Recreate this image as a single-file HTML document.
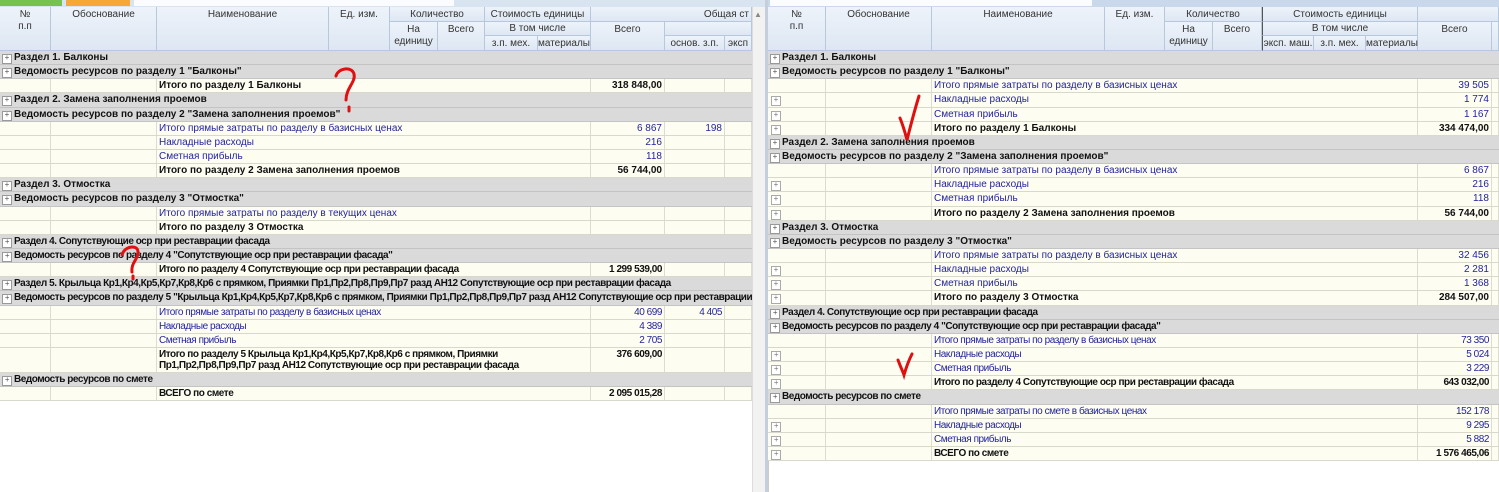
<!DOCTYPE html>
<html><head><meta charset="utf-8"><style>
*{margin:0;padding:0;box-sizing:border-box}
body{width:1499px;height:492px;overflow:hidden;background:#fff;font-family:"Liberation Sans","DejaVu Sans",sans-serif;font-size:10px;color:#111;position:relative}
.a{position:absolute}
.h{position:absolute;background:linear-gradient(#eef3fa,#dde7f3);border-right:1px solid #b8c8dc;border-bottom:1px solid #b8c8dc;color:#333;text-align:center;font-size:10px;line-height:12px;padding-top:2px}
.rows{position:absolute;top:51px}
.r{display:flex;height:14.15px;border-bottom:1px solid #d8d8cc;background:#fdfdf2;line-height:14.5px;white-space:nowrap;overflow:hidden}
.r>div{border-right:1px solid #dcdcd0;height:100%;overflow:visible;flex:none}
.g{background:#dadada;border-bottom:1px solid #c4c4c4;font-weight:bold;padding-left:14px;position:relative}
.g:before{content:"+";position:absolute;left:2px;top:3px;width:8px;height:8px;border:1px solid #999;background:#fff;font-size:8px;line-height:6px;text-align:center;font-weight:normal;color:#555}
.b{color:#2323a0}
.bd{font-weight:bold}
.n{text-align:right;padding-right:2px}
.t{padding-left:2px}
.pl{position:relative}
.pl:before{content:"+";position:absolute;left:3px;top:3px;width:8px;height:8px;border:1px solid #aaa;font-size:8px;line-height:6px;text-align:center;color:#777;background:#fff}
.c{letter-spacing:-0.45px}
</style></head><body>
<div class="a" style="left:0;top:0;width:765px;height:7px;background:#d9e4f1"></div>
<div class="a" style="left:0;top:0;width:62px;height:6px;background:#78c050"></div>
<div class="a" style="left:66px;top:0;width:64px;height:6px;background:#f5a838"></div>
<div class="a" style="left:134px;top:0;width:320px;height:6px;background:#fafcff"></div>
<div class="a" style="left:768px;top:0;width:731px;height:7px;background:#c9d8ea"></div>
<div class="a" style="left:770px;top:0;width:322px;height:6px;background:#fafcff"></div>
<div class="a" style="left:752px;top:7px;width:13px;height:485px;background:#f2f2f2;border-left:1px solid #ddd"></div>
<div class="a" style="left:754px;top:10px;font-size:8px;color:#888">▲</div>
<div class="a" style="left:765px;top:0;width:3px;height:492px;background:#c5cfdc"></div>

<div class="h" style="left:0;top:7px;width:51px;height:44px">№<br>п.п</div>
<div class="h" style="left:51px;top:7px;width:106px;height:44px">Обоснование</div>
<div class="h" style="left:157px;top:7px;width:172px;height:44px">Наименование</div>
<div class="h" style="left:329px;top:7px;width:61px;height:44px">Ед. изм.</div>
<div class="h" style="left:390px;top:7px;width:95px;height:15px">Количество</div>
<div class="h" style="left:390px;top:22px;width:48px;height:29px">На<br>единицу</div>
<div class="h" style="left:438px;top:22px;width:47px;height:29px">Всего</div>
<div class="h" style="left:485px;top:7px;width:106px;height:15px">Стоимость единицы</div>
<div class="h" style="left:485px;top:22px;width:106px;height:14px;padding-top:1px">В том числе</div>
<div class="h" style="left:485px;top:36px;width:53px;height:15px">з.п. мех.</div>
<div class="h" style="left:538px;top:36px;width:53px;height:15px">материалы</div>
<div class="h" style="left:591px;top:7px;width:161px;height:15px;text-align:right;padding-right:2px">Общая ст</div>
<div class="h" style="left:591px;top:22px;width:74px;height:29px">Всего</div>
<div class="h" style="left:665px;top:22px;width:87px;height:14px"></div>
<div class="h" style="left:665px;top:36px;width:60px;height:15px">основ. з.п.</div>
<div class="h" style="left:725px;top:36px;width:27px;height:15px;text-align:left;padding-left:3px">эксп</div>

<div class="h" style="left:768px;top:7px;width:58px;height:44px">№<br>п.п</div>
<div class="h" style="left:826px;top:7px;width:106px;height:44px">Обоснование</div>
<div class="h" style="left:932px;top:7px;width:173px;height:44px">Наименование</div>
<div class="h" style="left:1105px;top:7px;width:60px;height:44px">Ед. изм.</div>
<div class="h" style="left:1165px;top:7px;width:97px;height:15px">Количество</div>
<div class="h" style="left:1165px;top:22px;width:48px;height:29px">На<br>единицу</div>
<div class="h" style="left:1213px;top:22px;width:49px;height:29px">Всего</div>
<div class="h" style="left:1262px;top:7px;width:156px;height:15px;border-left:1px solid #555">Стоимость единицы</div>
<div class="h" style="left:1262px;top:22px;width:156px;height:14px;padding-top:1px;border-left:1px solid #555">В том числе</div>
<div class="h" style="left:1262px;top:36px;width:52px;height:15px;border-left:1px solid #555">эксп. маш.</div>
<div class="h" style="left:1314px;top:36px;width:52px;height:15px">з.п. мех.</div>
<div class="h" style="left:1366px;top:36px;width:52px;height:15px">материалы</div>
<div class="h" style="left:1418px;top:7px;width:81px;height:15px"></div>
<div class="h" style="left:1418px;top:22px;width:74px;height:29px">Всего</div>
<div class="h" style="left:1492px;top:22px;width:7px;height:29px"></div>

<div class="rows" style="left:0;width:752px">
<div class="r g">Раздел 1. Балконы</div>
<div class="r g">Ведомость ресурсов по разделу 1 "Балконы"</div>
<div class="r"><div style="width:51px"></div><div style="width:106px"></div><div class="t bd" style="width:434px">Итого по разделу 1 Балконы</div><div class="n bd" style="width:74px">318 848,00</div><div style="width:60px"></div><div style="width:27px"></div></div>
<div class="r g">Раздел 2. Замена заполнения проемов</div>
<div class="r g">Ведомость ресурсов по разделу 2 "Замена заполнения проемов"</div>
<div class="r"><div style="width:51px"></div><div style="width:106px"></div><div class="t b" style="width:434px">Итого прямые затраты по разделу в базисных ценах</div><div class="n b" style="width:74px">6 867</div><div class="n b" style="width:60px">198</div><div style="width:27px"></div></div>
<div class="r"><div style="width:51px"></div><div style="width:106px"></div><div class="t b" style="width:434px">Накладные расходы</div><div class="n b" style="width:74px">216</div><div style="width:60px"></div><div style="width:27px"></div></div>
<div class="r"><div style="width:51px"></div><div style="width:106px"></div><div class="t b" style="width:434px">Сметная прибыль</div><div class="n b" style="width:74px">118</div><div style="width:60px"></div><div style="width:27px"></div></div>
<div class="r"><div style="width:51px"></div><div style="width:106px"></div><div class="t bd" style="width:434px">Итого по разделу 2 Замена заполнения проемов</div><div class="n bd" style="width:74px">56 744,00</div><div style="width:60px"></div><div style="width:27px"></div></div>
<div class="r g">Раздел 3. Отмостка</div>
<div class="r g">Ведомость ресурсов по разделу 3 "Отмостка"</div>
<div class="r"><div style="width:51px"></div><div style="width:106px"></div><div class="t b" style="width:434px">Итого прямые затраты по разделу в текущих ценах</div><div style="width:74px"></div><div style="width:60px"></div><div style="width:27px"></div></div>
<div class="r"><div style="width:51px"></div><div style="width:106px"></div><div class="t bd" style="width:434px">Итого по разделу 3 Отмостка</div><div style="width:74px"></div><div style="width:60px"></div><div style="width:27px"></div></div>
<div class="r g c">Раздел 4. Сопутствующие  оср при реставрации фасада</div>
<div class="r g c">Ведомость ресурсов по разделу 4 "Сопутствующие  оср при реставрации фасада"</div>
<div class="r c"><div style="width:51px"></div><div style="width:106px"></div><div class="t bd" style="width:434px">Итого по разделу 4 Сопутствующие  оср при реставрации фасада</div><div class="n bd" style="width:74px">1 299 539,00</div><div style="width:60px"></div><div style="width:27px"></div></div>
<div class="r g c">Раздел 5. Крыльца  Кр1,Кр4,Кр5,Кр7,Кр8,Кр6 с прямком, Приямки Пр1,Пр2,Пр8,Пр9,Пр7  разд АН12 Сопутствующие  оср при реставрации фасада</div>
<div class="r g c">Ведомость ресурсов по разделу 5 "Крыльца  Кр1,Кр4,Кр5,Кр7,Кр8,Кр6 с прямком, Приямки Пр1,Пр2,Пр8,Пр9,Пр7  разд АН12 Сопутствующие  оср при реставрации фасада"</div>
<div class="r c"><div style="width:51px"></div><div style="width:106px"></div><div class="t b" style="width:434px">Итого прямые затраты по разделу в базисных ценах</div><div class="n b" style="width:74px">40 699</div><div class="n b" style="width:60px">4 405</div><div style="width:27px"></div></div>
<div class="r c"><div style="width:51px"></div><div style="width:106px"></div><div class="t b" style="width:434px">Накладные расходы</div><div class="n b" style="width:74px">4 389</div><div style="width:60px"></div><div style="width:27px"></div></div>
<div class="r c"><div style="width:51px"></div><div style="width:106px"></div><div class="t b" style="width:434px">Сметная прибыль</div><div class="n b" style="width:74px">2 705</div><div style="width:60px"></div><div style="width:27px"></div></div>
<div class="r c" style="height:25px;line-height:11.5px"><div style="width:51px"></div><div style="width:106px"></div><div class="t bd" style="width:434px;white-space:normal;padding-top:1px">Итого по разделу 5 Крыльца  Кр1,Кр4,Кр5,Кр7,Кр8,Кр6 с прямком, Приямки Пр1,Пр2,Пр8,Пр9,Пр7  разд АН12 Сопутствующие  оср при реставрации фасада</div><div class="n bd" style="width:74px;padding-top:1px">376 609,00</div><div style="width:60px"></div><div style="width:27px"></div></div>
<div class="r g c">Ведомость ресурсов по смете</div>
<div class="r c"><div style="width:51px"></div><div style="width:106px"></div><div class="t bd" style="width:434px">ВСЕГО по смете</div><div class="n bd" style="width:74px">2 095 015,28</div><div style="width:60px"></div><div style="width:27px"></div></div>
</div>

<div class="a" style="left:768px;top:51px;width:1px;height:441px;background:#ccc"></div>
<div class="rows" style="left:768px;width:731px">
<div class="r g">Раздел 1. Балконы</div>
<div class="r g">Ведомость ресурсов по разделу 1 "Балконы"</div>
<div class="r"><div style="width:58px"></div><div style="width:106px"></div><div class="t b" style="width:486px">Итого прямые затраты по разделу в базисных ценах</div><div class="n b" style="width:74px">39 505</div><div style="width:7px"></div></div>
<div class="r"><div class="pl" style="width:58px"></div><div style="width:106px"></div><div class="t b" style="width:486px">Накладные расходы</div><div class="n b" style="width:74px">1 774</div><div style="width:7px"></div></div>
<div class="r"><div class="pl" style="width:58px"></div><div style="width:106px"></div><div class="t b" style="width:486px">Сметная прибыль</div><div class="n b" style="width:74px">1 167</div><div style="width:7px"></div></div>
<div class="r"><div class="pl" style="width:58px"></div><div style="width:106px"></div><div class="t bd" style="width:486px">Итого по разделу 1 Балконы</div><div class="n bd" style="width:74px">334 474,00</div><div style="width:7px"></div></div>
<div class="r g">Раздел 2. Замена заполнения проемов</div>
<div class="r g">Ведомость ресурсов по разделу 2 "Замена заполнения проемов"</div>
<div class="r"><div style="width:58px"></div><div style="width:106px"></div><div class="t b" style="width:486px">Итого прямые затраты по разделу в базисных ценах</div><div class="n b" style="width:74px">6 867</div><div style="width:7px"></div></div>
<div class="r"><div class="pl" style="width:58px"></div><div style="width:106px"></div><div class="t b" style="width:486px">Накладные расходы</div><div class="n b" style="width:74px">216</div><div style="width:7px"></div></div>
<div class="r"><div class="pl" style="width:58px"></div><div style="width:106px"></div><div class="t b" style="width:486px">Сметная прибыль</div><div class="n b" style="width:74px">118</div><div style="width:7px"></div></div>
<div class="r"><div class="pl" style="width:58px"></div><div style="width:106px"></div><div class="t bd" style="width:486px">Итого по разделу 2 Замена заполнения проемов</div><div class="n bd" style="width:74px">56 744,00</div><div style="width:7px"></div></div>
<div class="r g">Раздел 3. Отмостка</div>
<div class="r g">Ведомость ресурсов по разделу 3 "Отмостка"</div>
<div class="r"><div style="width:58px"></div><div style="width:106px"></div><div class="t b" style="width:486px">Итого прямые затраты по разделу в базисных ценах</div><div class="n b" style="width:74px">32 456</div><div style="width:7px"></div></div>
<div class="r"><div class="pl" style="width:58px"></div><div style="width:106px"></div><div class="t b" style="width:486px">Накладные расходы</div><div class="n b" style="width:74px">2 281</div><div style="width:7px"></div></div>
<div class="r"><div class="pl" style="width:58px"></div><div style="width:106px"></div><div class="t b" style="width:486px">Сметная прибыль</div><div class="n b" style="width:74px">1 368</div><div style="width:7px"></div></div>
<div class="r"><div class="pl" style="width:58px"></div><div style="width:106px"></div><div class="t bd" style="width:486px">Итого по разделу 3 Отмостка</div><div class="n bd" style="width:74px">284 507,00</div><div style="width:7px"></div></div>
<div class="r g c">Раздел 4. Сопутствующие  оср при реставрации фасада</div>
<div class="r g c">Ведомость ресурсов по разделу 4 "Сопутствующие  оср при реставрации фасада"</div>
<div class="r c"><div style="width:58px"></div><div style="width:106px"></div><div class="t b" style="width:486px">Итого прямые затраты по разделу в базисных ценах</div><div class="n b" style="width:74px">73 350</div><div style="width:7px"></div></div>
<div class="r c"><div class="pl" style="width:58px"></div><div style="width:106px"></div><div class="t b" style="width:486px">Накладные расходы</div><div class="n b" style="width:74px">5 024</div><div style="width:7px"></div></div>
<div class="r c"><div class="pl" style="width:58px"></div><div style="width:106px"></div><div class="t b" style="width:486px">Сметная прибыль</div><div class="n b" style="width:74px">3 229</div><div style="width:7px"></div></div>
<div class="r c"><div class="pl" style="width:58px"></div><div style="width:106px"></div><div class="t bd" style="width:486px">Итого по разделу 4 Сопутствующие  оср при реставрации фасада</div><div class="n bd" style="width:74px">643 032,00</div><div style="width:7px"></div></div>
<div class="r g c">Ведомость ресурсов по смете</div>
<div class="r c"><div style="width:58px"></div><div style="width:106px"></div><div class="t b" style="width:486px">Итого прямые затраты по смете в базисных ценах</div><div class="n b" style="width:74px">152 178</div><div style="width:7px"></div></div>
<div class="r c"><div class="pl" style="width:58px"></div><div style="width:106px"></div><div class="t b" style="width:486px">Накладные расходы</div><div class="n b" style="width:74px">9 295</div><div style="width:7px"></div></div>
<div class="r c"><div class="pl" style="width:58px"></div><div style="width:106px"></div><div class="t b" style="width:486px">Сметная прибыль</div><div class="n b" style="width:74px">5 882</div><div style="width:7px"></div></div>
<div class="r c"><div class="pl" style="width:58px"></div><div style="width:106px"></div><div class="t bd" style="width:486px">ВСЕГО по смете</div><div class="n bd" style="width:74px">1 576 465,06</div><div style="width:7px"></div></div>
</div>

<svg class="a" style="left:0;top:0" width="1499" height="492">
<g fill="none" stroke="#e01010" stroke-width="3" stroke-linecap="round">
<path d="M336 76 C338 68 352 66 354 74 C356 82 346 88 346 100"/>
<path d="M349 107 L349 111"/>
<path d="M122 255 C124 246 138 244 138 252 C138 260 131 262 132 272"/>
<path d="M133 276 L133 279"/>
<path d="M900 118 C904 128 906 136 907 140 C910 128 914 112 919 96"/>
<path d="M898 360 C901 368 903 372 904 375 C906 368 909 360 912 354"/>
</g></svg>
</body></html>
